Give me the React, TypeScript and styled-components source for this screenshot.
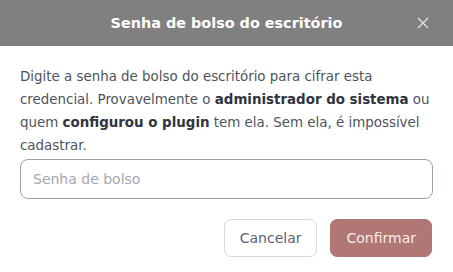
import React from "react";
import styled, { createGlobalStyle } from "styled-components";

const Global = createGlobalStyle`
  html, body { margin: 0; padding: 0; background: #ffffff; }
  body { font-family: "DejaVu Sans", "Open Sans", sans-serif; }
  * { box-sizing: border-box; }
`;

const Dialog = styled.div`
  width: 453px;
  height: 272px;
  background: #ffffff;
  display: flex;
  flex-direction: column;
`;

const Header = styled.header`
  height: 46px;
  background: #808080;
  display: flex;
  align-items: center;
  justify-content: center;
  position: relative;
`;

const Title = styled.h2`
  margin: 0;
  font-size: 14.4px;
  font-weight: 700;
  color: #ffffff;
`;

const Close = styled.button`
  position: absolute;
  right: 22px;
  top: 15px;
  width: 16px;
  height: 16px;
  padding: 0;
  border: 0;
  background: transparent;
  display: flex;
  align-items: center;
  justify-content: center;
`;

const Body = styled.div`
  padding: 19px 20px 0 20px;
  display: flex;
  flex-direction: column;
`;

const Text = styled.p`
  margin: 0 0 2px;
  font-size: 13.4px;
  line-height: 23px;
  color: #4d525d;
  b { font-weight: 700; color: #2f3440; }
`;

const Input = styled.input`
  height: 40px;
  width: 413px;
  border: 1px solid #9aa0ab;
  border-radius: 8px;
  padding: 0 12px;
  font-family: inherit;
  font-size: 14px;
  color: #3a3f4a;
  outline: none;
  &::placeholder { color: #a3a7b0; }
`;

const Actions = styled.div`
  display: flex;
  justify-content: flex-end;
  gap: 13px;
  margin-top: 20px;
  padding-right: 1px;
`;

const Button = styled.button<{ $primary?: boolean }>`
  height: 38px;
  padding: 0 15px;
  border-radius: 7px;
  font-family: inherit;
  font-size: 14px;
  border: 1px solid ${(p) => (p.$primary ? "#b07775" : "#d6d9de")};
  background: ${(p) => (p.$primary ? "#b07775" : "#ffffff")};
  color: ${(p) => (p.$primary ? "#f6ecec" : "#5b6271")};
`;

export default function App() {
  return (
    <>
      <Global />
      <Dialog>
        <Header>
          <Title>Senha de bolso do escritório</Title>
          <Close aria-label="Fechar">
            <svg width="12" height="12" viewBox="0 0 12 12">
              <path d="M1 1L11 11M11 1L1 11" stroke="#e4e4e4" strokeWidth="1.2" />
            </svg>
          </Close>
        </Header>
        <Body>
          <Text>
            Digite a senha de bolso do escritório para cifrar esta credencial. Provavelmente o{" "}
            <b>administrador do sistema</b> ou quem <b>configurou o plugin</b> tem ela. Sem ela, é
            impossível cadastrar.
          </Text>
          <Input placeholder="Senha de bolso" />
          <Actions>
            <Button>Cancelar</Button>
            <Button $primary>Confirmar</Button>
          </Actions>
        </Body>
      </Dialog>
    </>
  );
}
